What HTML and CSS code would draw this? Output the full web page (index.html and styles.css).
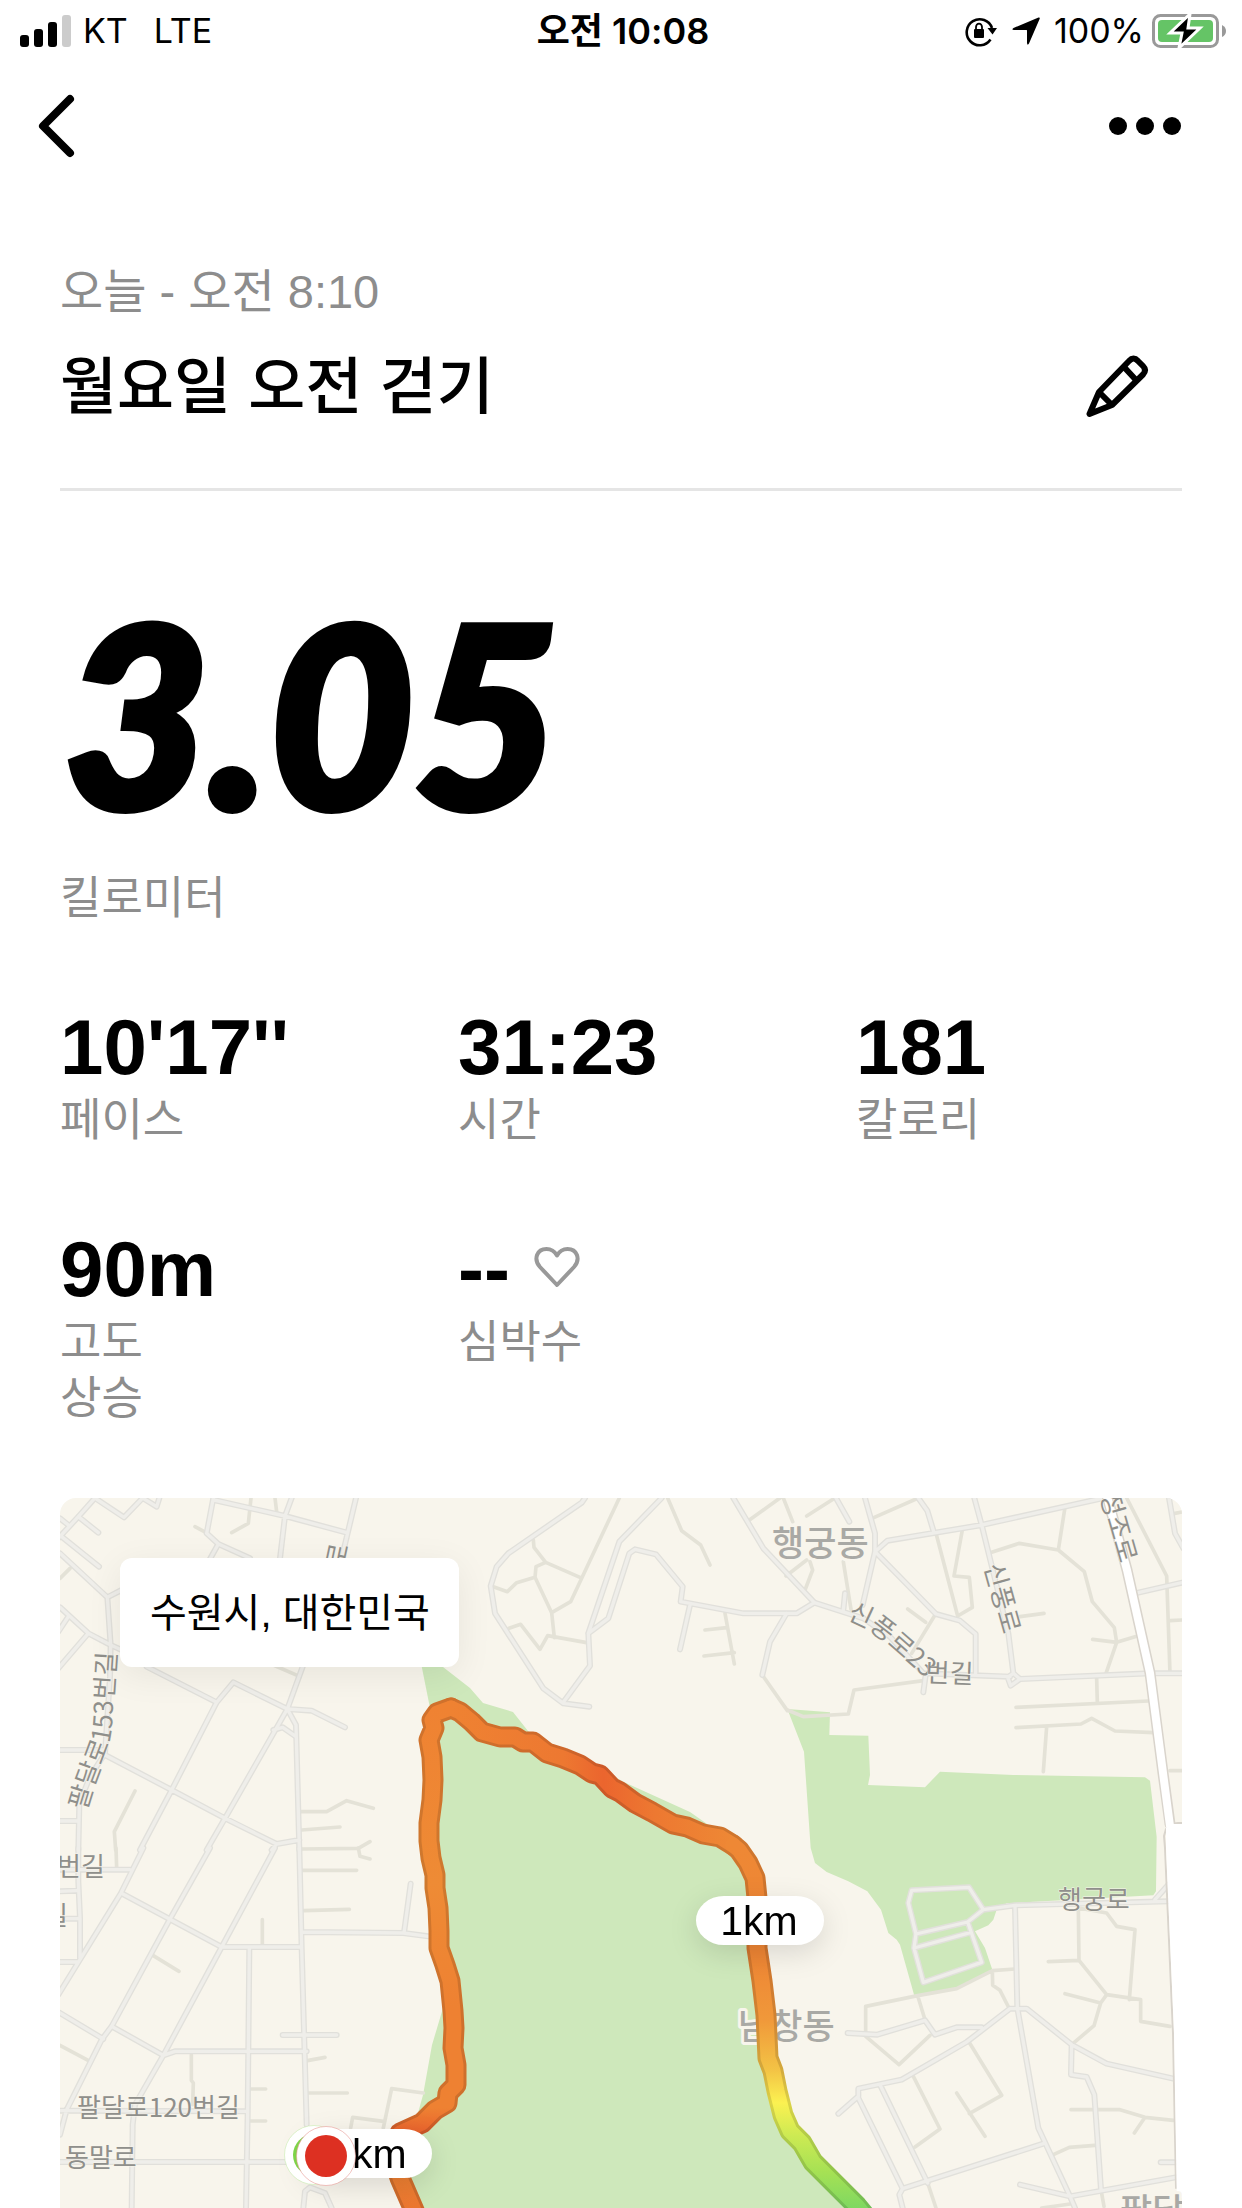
FILE: index.html
```html
<!DOCTYPE html>
<html lang="ko">
<head>
  <meta charset="UTF-8" />
  <meta name="viewport" content="width=device-width, initial-scale=1" />
  <title>월요일 오전 걷기</title>
  <link rel="stylesheet" href="styles.css">
</head>
<body>

  <div class="status-bar">
    <div class="status-left">
      <svg class="signal" width="51" height="32" viewBox="0 0 51 32" aria-hidden="true">
        <rect x="0" y="20" width="9" height="12" rx="3" />
        <rect x="14" y="14" width="9" height="18" rx="3" />
        <rect x="28" y="7" width="9" height="25" rx="3" />
        <rect x="42" y="0" width="9" height="32" rx="3" fill="#ccc" />
      </svg>
      <span class="carrier">KT</span>
      <span class="network">LTE</span>
    </div>
    <div class="status-time">오전 10:08</div>
    <div class="status-right">
      <svg width="34" height="32" viewBox="0 0 34 32" aria-hidden="true">
        <path d="M26.5 24.5A13 13 0 1 1 28 13" fill="none" stroke="#000" stroke-width="2.6" />
        <path d="M23.5 13H33L28.5 19.5Z" />
        <rect x="10" y="14" width="10" height="9" rx="1" />
        <path d="M12 15V12a3 3.4 0 0 1 6 0V15" fill="none" stroke="#000" stroke-width="1.8" />
      </svg>
      <svg class="location" width="28" height="28" viewBox="0 0 28 28" aria-hidden="true">
        <path d="M26.5 0.5Q28.3 0 27.6 2L17 26.5Q15.5 29 15 26V13.5Q15 13 14.5 13H2Q-1 12.5 1.5 11Z" />
      </svg>
      <span class="percent">100%</span>
      <svg width="74" height="36" viewBox="0 0 74 36" aria-hidden="true">
        <rect x="1.5" y="2.5" width="64" height="31" rx="7" fill="none" stroke="#999" stroke-width="3" />
        <rect x="6" y="7" width="55" height="22" rx="4" fill="#65c466" />
        <path d="M70 12Q74 14 74 18T70 24Z" fill="#999" />
        <path d="M38 1L18 20H30L27 35L48 15H36Z" fill="#000" stroke="#fff" stroke-width="3" />
      </svg>
    </div>
  </div>

  <nav class="top-nav">
    <button class="icon-btn" aria-label="뒤로">
      <svg width="38" height="64" viewBox="0 0 38 64" aria-hidden="true">
        <path d="M33 5L6 32L33 59" fill="none" stroke="#000" stroke-width="8" stroke-linecap="round" stroke-linejoin="round" />
      </svg>
    </button>
    <button class="icon-btn" aria-label="더 보기">
      <svg width="74" height="20" viewBox="0 0 74 20" aria-hidden="true">
        <circle cx="10" cy="10" r="9" />
        <circle cx="37" cy="10" r="9" />
        <circle cx="64" cy="10" r="9" />
      </svg>
    </button>
  </nav>

  <main class="run">

    <header class="run-header">
      <div>
        <p class="run-date">오늘 - 오전 8:10</p>
        <h1>월요일 오전 걷기</h1>
      </div>
      <button class="icon-btn edit" aria-label="이름 수정">
        <svg width="64" height="64" viewBox="0 0 64 64" fill="none" stroke="#000" stroke-width="6" stroke-linejoin="round" stroke-linecap="round" aria-hidden="true">
          <path d="M4.5 60L14 38L44 7Q48.500 2 53 7L58 12Q62 16 58 20.500L27 51Z" />
          <path d="M14 38L27 51M39 13L51 26" stroke-linecap="butt" />
        </svg>
      </button>
    </header>

    <section class="distance">
      <div class="distance-value">3.05</div>
      <div class="label">킬로미터</div>
    </section>

    <section class="stats">
      <div class="stat">
        <div class="stat-value">10'17''</div>
        <div class="label">페이스</div>
      </div>
      <div class="stat">
        <div class="stat-value">31:23</div>
        <div class="label">시간</div>
      </div>
      <div class="stat">
        <div class="stat-value">181</div>
        <div class="label">칼로리</div>
      </div>
      <div class="stat">
        <div class="stat-value">90m</div>
        <div class="label">고도<br>상승</div>
      </div>
      <div class="stat">
        <div class="stat-value">--
          <svg width="46" height="44" viewBox="0 0 46 44" aria-hidden="true">
            <path d="M23 38L6 20C-1 12 3 2 12.500 2C18 2 21 5 23 8.500C25 5 28 2 33.500 2C43 2 47 12 40 20Z" fill="none" stroke="#999" stroke-width="4" stroke-linejoin="round" />
          </svg>
        </div>
        <div class="label">심박수</div>
      </div>
    </section>

    <section class="map">
      <svg class="map-canvas" viewBox="0 0 1122 710" role="img" aria-label="경로 지도">
        <defs>
          <g id="roads">
            <g transform="translate(0 -8) scale(.33333)">
              <path d="M-5 145L55 80 105 24M55 80L115 128M105 24L192 82 248 24 290 50 298 24M0 85L25 105M5 140L117 230M0 190L142 322 185 300M142 322L152 465M0 352L85 430 152 465 185 480M25 380L-5 425M85 430L-5 535M152 465L150 560 135 790 90 860 58 940 55 1080M0 780H130M135 795L335 900 495 985 650 1062 718 1050M0 993H55M260 530L470 637M240 1080L335 900 470 637 520 577 682 657 755 662 855 712M440 1080L495 985 682 657 728 530M682 657L708 705 718 1080M640 720L668 712 708 740M460 24L440 130 475 162 570 205M440 225L475 162M462 30L675 78 860 128M695 24L675 78 660 205M888 24L845 205M635 1080L650 1062" />
            </g>
            <g transform="translate(340 -8) scale(.33333)">
              <path d="M555 24L545 38 325 190 290 230 272 288 285 370 430 595 490 640 568 650M490 637L570 527 565 430 658 155 785 24M565 430L625 385 688 190 705 178 768 193 848 290 842 335 1030 370 1190 370 1243 338M870 345L840 478M1000 24L1090 175 1243 338M1160 370L1110 455 1087 555" />
            </g>
            <g transform="translate(720 -8) scale(.33333)">
              <path d="M103 338L250 385 330 440 430 550 690 560M168 24L208 95M255 24L285 130 285 185 248 345M285 185L468 372 540 392 587 432 587 550M285 185L322 152 605 105 970 24M415 24L442 62 462 128M583 24L605 105 685 430 700 550 720 567 692 587 683 562 700 550M720 567L1110 550 1206 550M1065 310L1206 278M437 555L430 607M190 360L195 310M1167 24L1185 130 1210 175" />
            </g>
            <g transform="translate(0 350) scale(.33333)">
              <path d="M0 130L50 128M0 65H210M55 0L55 100 60 210 60 330M20 212H60M0 342H55M250 0L183 135 -5 440M450 0L330 213 155 535 125 575 20 785 0 860M645 0L485 297 310 622 225 770 218 830 215 1080M183 135L485 297 725 297M0 495L130 573M155 535L310 622 345 610 740 610M568 300L563 800 558 1080M718 0L725 300 740 830M725 252L1030 255 1105 265M1032 255L1052 107M668 561H830M0 788L563 790M0 942H700M730 1080L735 1030 750 1018 795 1035 815 1080" />
            </g>
            <g transform="translate(720 350) scale(.33333)">
              <path d="M395 127L567 118 610 185 563 222 605 343 430 403 402 300 408 258 385 165ZM408 258L563 222M402 300L573 253M610 185L705 172 1165 160M1125 155L1165 110M705 172L712 480 775 840 870 1045 885 1080M203 555L292 560 435 517 465 560 530 538 605 538M175 797L235 745 235 722 365 695 560 582 690 482 740 482 875 590 980 647 1180 692M875 590L873 680 920 687 943 740 963 1025M235 750L368 1022 358 1040 368 1080M300 710L443 1005M368 1022L790 887M720 1010L870 1045 1187 988M1142 943H1187" />
            </g>
          </g>

          <g id="route">
            <path stroke="url(#leg-west)" d="M358 722L353 710 340 680 332 656 340 635 362 625 375 612 387 605 388 595 396 587 396 567 393 550 394 530 393 513 390 483 385 467 379 450 379 433 378 410 375 390 375 377 371 360 369 343 369 325 372 302 373 282 372 259 369 242 374 230 372 222 377 215 391 210" />
            <path stroke="url(#leg-north)" d="M391 210L400 214 412 224 422 234 440 239 455 239 463 244 473 244 487 255 503 260 520 267 532 275 540 277 552 290 560 294 575 305 592 314 613 326 627 329 643 336 660 339 673 347" />
            <path stroke="url(#leg-east)" d="M673 347L679 352 688 365 695 380 697 400 697 450 702 483 706 517 708 560 713 573 717 593 723 617 730 633 742 645 753 664 773 684 797 708 810 724" />
          </g>

          <linearGradient id="leg-west" gradientUnits="userSpaceOnUse" x1="0" y1="210" x2="0" y2="710">
            <stop offset="0" stop-color="#ef8232" />
            <stop offset=".35" stop-color="#ee8b35" />
            <stop offset=".6" stop-color="#ee8132" />
            <stop offset=".8" stop-color="#ee8132" />
            <stop offset=".85" stop-color="#e9622d" />
            <stop offset=".93" stop-color="#ee8132" />
            <stop offset="1" stop-color="#ec7730" />
          </linearGradient>
          <linearGradient id="leg-north" gradientUnits="userSpaceOnUse" x1="391" y1="0" x2="673" y2="0">
            <stop offset="0" stop-color="#ef8232" />
            <stop offset=".4" stop-color="#ed7831" />
            <stop offset=".54" stop-color="#eb652e" />
            <stop offset=".72" stop-color="#ed7831" />
            <stop offset="1" stop-color="#ee8835" />
          </linearGradient>
          <linearGradient id="leg-east" gradientUnits="userSpaceOnUse" x1="0" y1="347" x2="0" y2="710">
            <stop offset="0" stop-color="#ee8835" />
            <stop offset=".3" stop-color="#ee8534" />
            <stop offset=".48" stop-color="#f0983a" />
            <stop offset=".62" stop-color="#f3c345" />
            <stop offset=".71" stop-color="#fbf151" />
            <stop offset=".8" stop-color="#cdea53" />
            <stop offset=".9" stop-color="#a6e154" />
            <stop offset="1" stop-color="#7fd861" />
          </linearGradient>

          <path id="name-paldal" d="M26 313L34 287 46 255Q53 240 53 205L57 145" />
          <path id="name-sinpung23" d="M786 121Q810 129 830 149L862 177Q867 183 873 184L926 186" />
          <path id="name-sinpung" d="M924 68L946 147" />
          <path id="name-jeongjo" d="M1040 -3L1065 84" />
        </defs>

        <rect class="land" width="1122" height="710" />

        <!-- parks -->
        <path class="park" d="M358 150L383 169 410 190 423 205 453 214 468 233 566 285 630 314 650 328 677 350 695 380 697 450 708 560 723 617 792 710H355L340 680 350 630 358 615 363 597 372 547 383 510 390 480 373 380 372 260 374 230 369 205Z" />
        <path class="park" transform="translate(720 -8) scale(.33333)" d="M22 657L150 667 148 735 265 737 270 855 264 885 435 892 480 845 700 855 1095 862 1110 872 1130 1040 1128 1204 1120 1216 680 1240 650 1259 640 1289 625 1306 585 1324 615 1374 637 1439 530 1499 403 1517 360 1364 350 1349 325 1329 303 1259 262 1204 205 1174 140 1146 105 1119 92 1074 72 785Z" />

        <!-- alleys -->
        <g class="alleys">
          <path transform="translate(0 -8) scale(.33333)" d="M405 110L437 127M573 24L565 100 515 128M645 24L650 65M0 265L30 235M225 903L163 1025 167 1080M725 965L800 965 860 932 940 955M725 1020L840 1011M725 1077L895 1075 930 1055M640 525L720 560" />
          <path transform="translate(340 -8) scale(.33333)" d="M400 150L402 172 437 217 540 262M658 24L512 335 455 368M437 217L408 230 405 262 350 278 322 305 280 290M405 262L455 368 463 443M327 415L362 403 420 478 443 437 560 458M803 24L845 122 902 165 930 225M975 370L1003 522M915 420L980 413M912 498L1003 488M1087 555L1162 662M1045 92L1140 24M1150 24L1178 95" />
          <path transform="translate(720 -8) scale(.33333)" d="M80 78L165 24M283 82L415 24M18 258L80 210M75 300L98 240 90 215M190 215L213 358M468 130L533 378M547 120L522 258 568 262 577 352 533 378M383 357L437 397M465 375L395 490M855 52L835 180M635 187L718 160 835 180 913 245 937 335 1003 413 1010 457 978 550M938 448L1010 457 1065 440M720 380L792 370M1040 24L1160 258 1170 550M1170 392L1206 390M1185 70L1206 66M22 660L70 680 205 672 222 600 430 572M708 652L1105 633M950 565L952 637M708 713L903 702 935 685 1005 723 1120 728M800 710L790 845M1170 842H1206" />
          <path transform="translate(0 350) scale(.33333)" d="M168 0L170 60M725 67H890M730 188L868 184M895 0L900 25 930 33M607 215V290M275 320L357 370M0 592L90 640M394 620L394 697 400 705 398 770M570 723H617M570 819H617M742 638L795 628M745 735H862M872 840L878 808 970 820M970 840L995 722 1090 735" />
          <path transform="translate(720 350) scale(.33333)" d="M637 368L530 422 413 443 257 475 257 565 357 650 450 562M413 443L435 515M637 368L705 363M637 368L638 412 660 427 687 480M895 180L980 195 1010 235 1065 245 1048 455M895 180L897 337 805 341M897 337L980 440 1082 455 1082 520 1170 535M980 440L962 465 942 533 875 590M855 437L962 465M567 582L665 742 568 797M530 735L615 865M400 685L480 843 405 897M873 785L1020 785 1095 808 1180 817M1095 808L1063 855M820 920L868 898 945 892M443 1005L468 1080M963 1025L972 1075M785 1080L870 1068" />
        </g>

        <!-- roads: edge first, then fill -->
        <use href="#roads" class="road-edge" />
        <use href="#roads" class="road-fill" />

        <!-- main road -->
        <path class="main-edge" d="M1111 326L1118 325H1124M1106 331L1104 338 1105 350 1113 535 1116 690M1119 340L1122 420" />
        <path class="main-edge-wide" d="M1047 -2L1067 72 1090 175 1103 275 1110 326" />
        <path class="main-fill" d="M1047 -2L1067 72 1090 175 1103 275 1110 328" />
        <path class="main-block" d="M1106 330L1112 326H1124V710H1117L1114 535 1106 350Z" />

        <!-- place names -->
        <g class="district">
          <text x="712" y="58">행궁동</text>
          <text x="678" y="541">남창동</text>
          <text x="1060" y="726">팔달</text>
        </g>
        <g class="street">
          <text><textPath href="#name-paldal">팔달로153번길</textPath></text>
          <text><textPath href="#name-sinpung23">신풍로23번길</textPath></text>
          <text><textPath href="#name-sinpung">신풍로</textPath></text>
          <text><textPath href="#name-jeongjo">정조로</textPath></text>
          <text transform="translate(284 71) rotate(-78)">로</text>
          <text x="-3" y="378">번길</text>
          <text x="-16" y="427">길</text>
          <text x="17" y="619">팔달로120번길</text>
          <text x="5" y="669">동말로</text>
          <text x="998" y="411">행궁로</text>
        </g>

        <!-- walked route -->
        <use href="#route" class="route-line route-shade" />
        <use href="#route" class="route-line route-core" />

        <g class="pin">
          <rect x="636" y="398" width="128" height="49" rx="28" ry="25" />
          <text x="699" y="437">1km</text>
        </g>
        <g class="pin">
          <rect x="243" y="631" width="129" height="49" rx="28" ry="25" />
          <text x="308" y="670">3km</text>
        </g>
        <g>
          <circle cx="254" cy="657" r="29.500" fill="#fff" stroke="#c9ecb0" stroke-width="0.600" />
          <circle cx="254" cy="657" r="21" fill="#7ed348" />
          <circle cx="266" cy="658" r="29.500" fill="#fff" stroke="#e79a95" stroke-width="0.600" />
          <circle cx="266" cy="658" r="21" fill="#dd3022" />
        </g>
      </svg>
      <div class="map-place">수원시, 대한민국</div>
    </section>

  </main>

</body>
</html>
```
FILE: styles.css
```css
/* Reset */
* {
  margin: 0;
  padding: 0;
  box-sizing: border-box;
}

body {
  font-family: "Liberation Sans", "Noto Sans CJK KR", sans-serif;
  background: #fff;
  color: #000;
}

svg {
  display: block;
}

.icon-btn {
  background: none;
  border: none;
  cursor: pointer;
}

/* Status bar */
.status-bar {
  display: grid;
  grid-template-columns: 1fr auto 1fr;
  align-items: center;
  height: 62px;
  padding: 0 16px 0 20px;
  font-family: Inter, "Noto Sans CJK KR", sans-serif;
  font-size: 34px;
  line-height: 40px;
}

.status-left,
.status-right {
  display: flex;
  align-items: center;
}

.status-right {
  justify-content: flex-end;
}

.carrier {
  margin-left: 12px;
}

.network {
  margin-left: 26px;
}

.status-time {
  font-size: 36px;
  font-weight: 600;
}

.location {
  margin: 0 14px;
}

.percent {
  margin-right: 8px;
}

/* Navigation */
.top-nav {
  display: flex;
  justify-content: space-between;
  align-items: center;
  height: 128px;
  padding: 0 60px 0 37px;
}

/* Run details */
.run {
  padding: 0 60px;
}

.run-header {
  display: flex;
  justify-content: space-between;
  align-items: flex-end;
  padding: 74px 33px 60px 0;
  border-bottom: 3px solid #e5e5e5;
}

.edit {
  margin-bottom: 10px;
}

.run-date {
  font-size: 47px;
  line-height: 56px;
  color: #8d8d8d;
}

h1 {
  margin-top: 28px;
  font-size: 62px;
  font-weight: 500;
  line-height: 80px;
}

.distance {
  padding-top: 90px;
}

.distance-value {
  padding-left: 4px;
  font-family: Lato, sans-serif;
  font-size: 250px;
  font-style: italic;
  font-weight: 900;
  line-height: 260px;
  -webkit-text-stroke: 8px #000;
}

.label {
  font-size: 45px;
  line-height: 56px;
  color: #8d8d8d;
}

.distance .label {
  margin-top: 30px;
}

/* Stats */
.stats {
  display: grid;
  grid-template-columns: repeat(3, 1fr);
  gap: 76px 72px;
  margin-top: 76px;
}

.stat-value {
  display: flex;
  align-items: center;
  gap: 24px;
  margin-bottom: 2px;
  font-size: 78px;
  font-weight: 700;
  line-height: 88px;
}

/* Map */
.map {
  position: relative;
  margin-top: 71px;
  overflow: hidden;
  border-radius: 16px 16px 0 0;
}

.map-canvas {
  width: 100%;
  height: auto;
}

.map-place {
  position: absolute;
  top: 60px;
  left: 60px;
  padding: 27px 29px 26px 30px;
  border-radius: 12px;
  background: #fff;
  box-shadow: 0 8px 36px rgba(0, 0, 0, 0.07);
  font-size: 40px;
  line-height: 56px;
}

.land {
  fill: #f8f5ec;
}

.park {
  fill: #cee8bb;
}

.alleys,
.road-edge,
.road-fill,
.main-edge,
.main-edge-wide,
.main-fill,
.route-line {
  fill: none;
  stroke-linecap: round;
  stroke-linejoin: round;
}

.alleys {
  stroke: #e4e2d7;
  stroke-width: 11px;
}

.road-edge {
  stroke: #e1e0db;
  stroke-width: 18px;
}

.road-fill {
  stroke: #efeeea;
  stroke-width: 10px;
}

.main-edge {
  stroke: #d9d4cc;
  stroke-width: 2px;
}

.main-edge-wide {
  stroke: #d9d4cc;
  stroke-width: 11px;
}

.main-fill {
  stroke: #fff;
  stroke-width: 8px;
}

.main-block {
  fill: #fff;
}

.district,
.street {
  font-family: "Noto Sans CJK KR", sans-serif;
  paint-order: stroke;
  stroke: #f8f5ec;
  stroke-linejoin: round;
}

.district {
  font-size: 35px;
  font-weight: 500;
  fill: #a9a9a5;
  stroke-width: 6px;
}

.street {
  font-size: 26px;
  fill: #8f8f8b;
  stroke-width: 1px;
}

.route-shade {
  stroke-width: 21px;
  filter: brightness(0.87);
}

.route-core {
  stroke-width: 15px;
}

/* Distance pins */
.pin {
  filter: drop-shadow(0 8px 14px rgba(0, 0, 0, 0.12));
}

.pin rect {
  fill: #fff;
}

.pin text {
  font-size: 41px;
  text-anchor: middle;
}
```
